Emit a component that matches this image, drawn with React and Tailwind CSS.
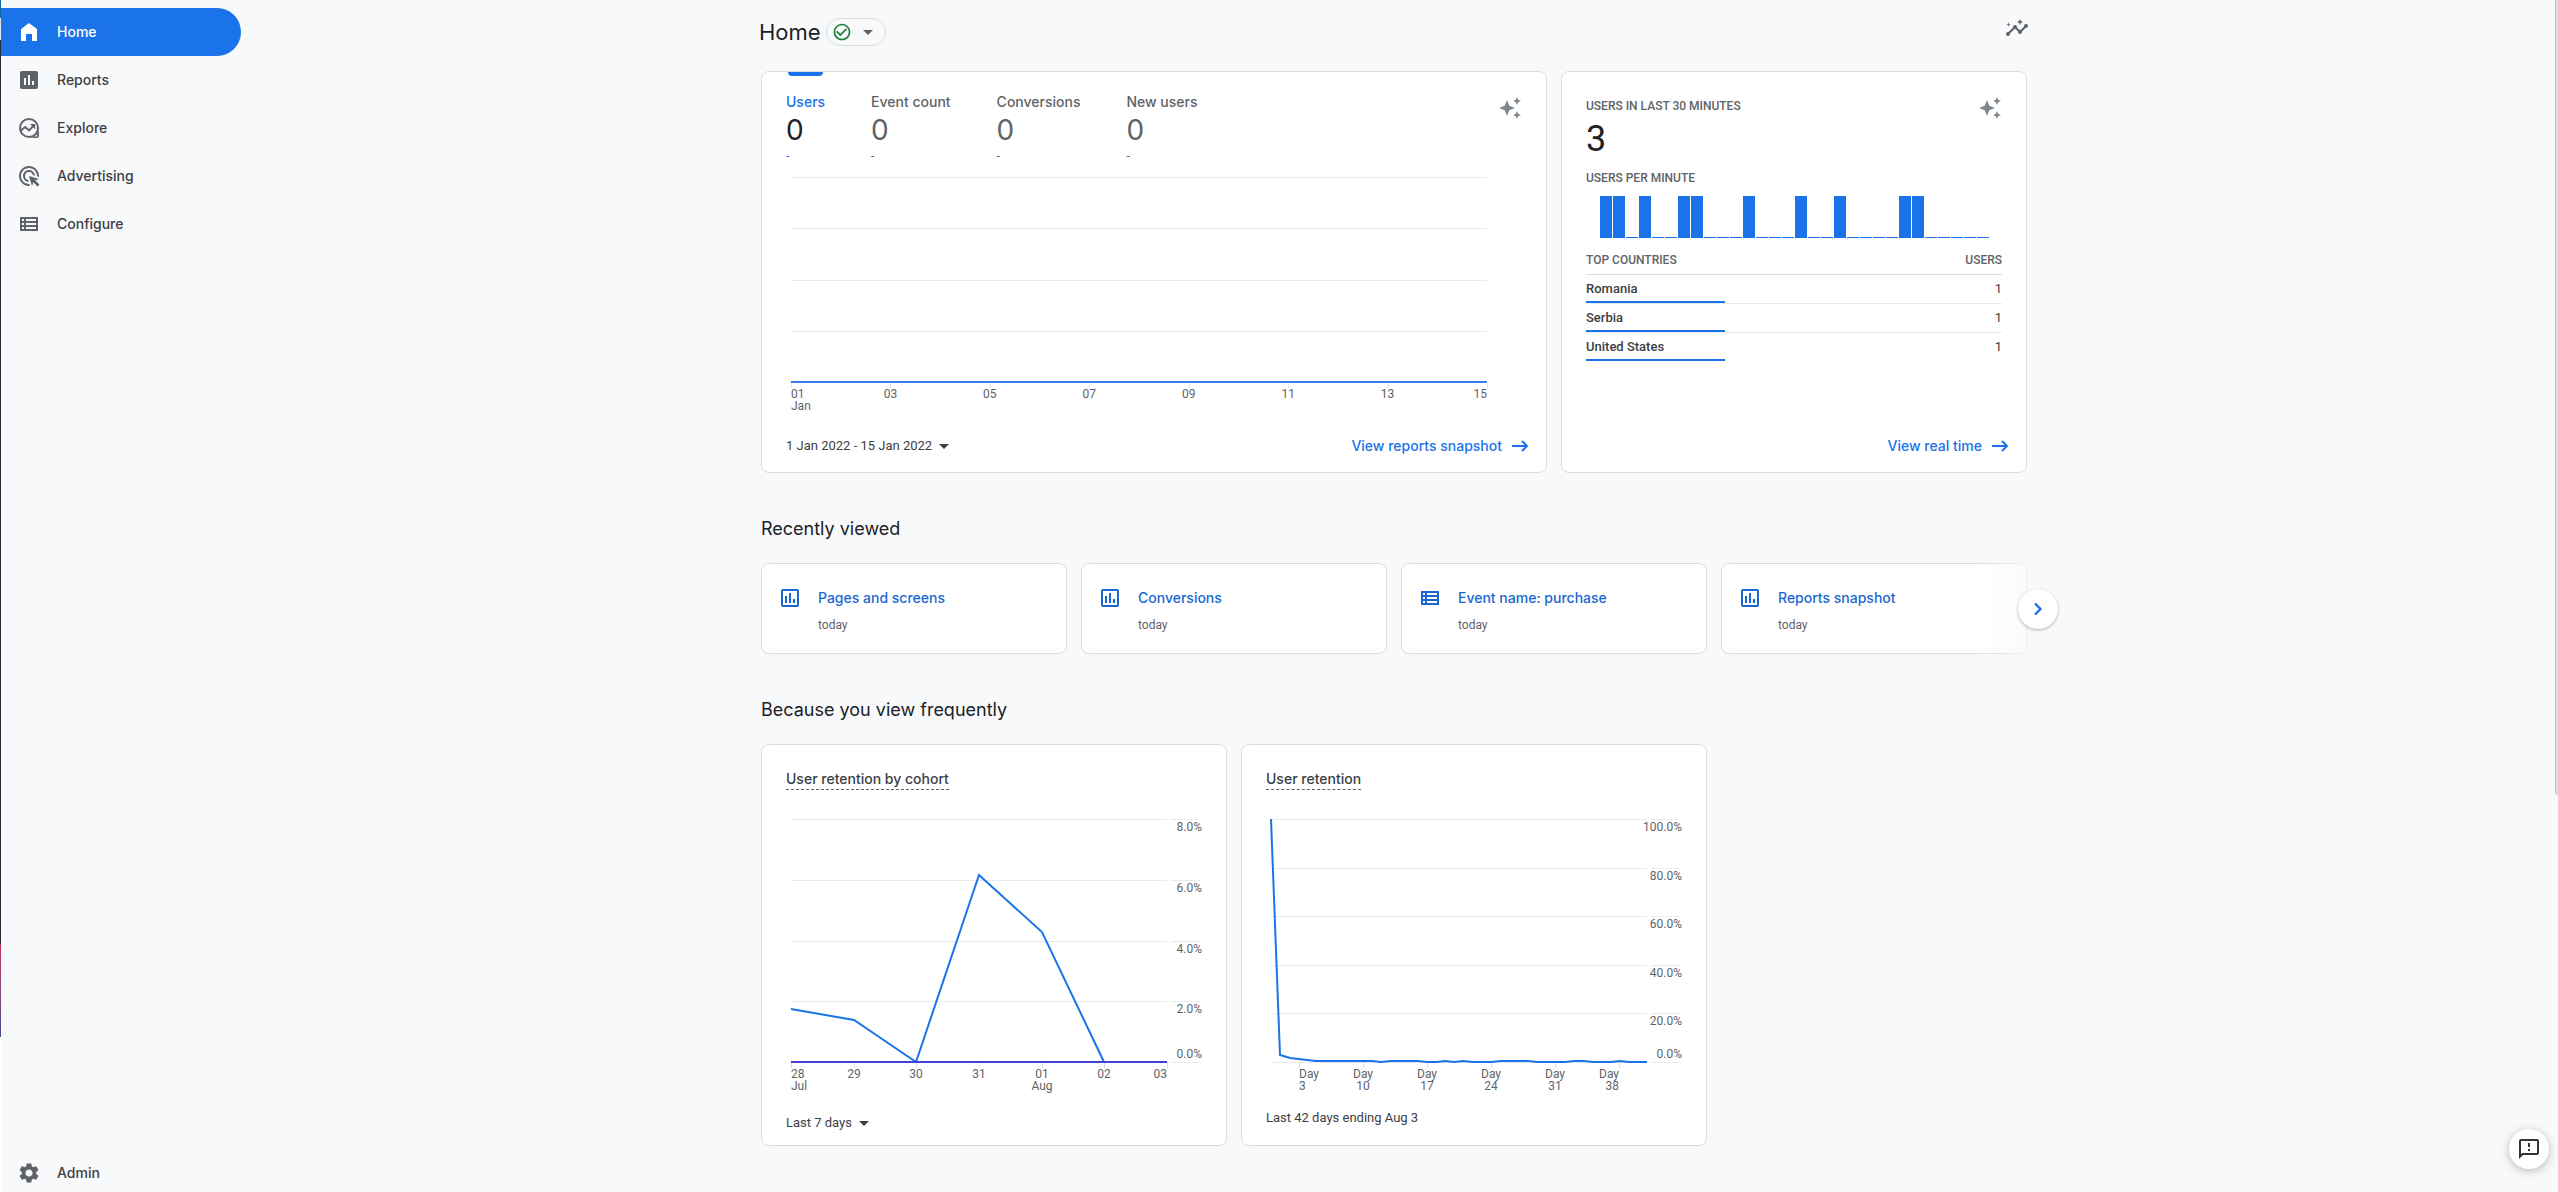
import {
    MdAdsClick,
    MdArrowDropDown,
    MdAssessment,
    MdCheckCircleOutline,
    MdInsights,
    MdOutlineAssessment,
    MdOutlineFeedback,
    MdOutlineViewList,
    MdSettings,
} from "react-icons/md";

function HomeIcon({ className }) {
    return (
        <svg viewBox="0 0 24 24" className={className} fill="currentColor" aria-hidden="true">
            <path d="M4 21V9l8-6 8 6v12h-5v-7H9v7z" />
        </svg>
    );
}

function ExploreIcon({ className }) {
    return (
        <svg viewBox="0 0 24 24" className={className} fill="none" stroke="currentColor" strokeWidth="2" aria-hidden="true">
            <circle cx="12" cy="12" r="9" />
            <path d="M22 12v8.200a1.800 1.800 0 0 1-1.800 1.800H12c5.500 0 10-4.500 10-10z" fill="currentColor" stroke="none" />
            <circle cx="19.400" cy="19.800" r="0.900" fill="#f8f9fb" stroke="none" />
            <path d="M3.500 14.800l4.700-3.800 3.800 3.400 4.600-4.600" />
            <path d="M13 8h5.200v5.200z" fill="currentColor" stroke="none" />
        </svg>
    );
}

function SparkleIcon({ className }) {
    return (
        <svg viewBox="0 0 24 24" className={className} fill="currentColor" aria-hidden="true">
            <path d="M9 4l2.300 5.700L17 12l-5.700 2.300L9 20l-2.300-5.700L1 12l5.700-2.300z" />
            <path d="M19 1l1.200 2.800L23 5l-2.800 1.200L19 9l-1.200-2.800L15 5l2.800-1.200z" />
            <path d="M19 15l1.200 2.800L23 19l-2.800 1.200L19 23l-1.200-2.800L15 19l2.800-1.200z" />
        </svg>
    );
}

function ArrowIcon({ className }) {
    return (
        <svg viewBox="0 0 20 20" className={className} fill="none" stroke="currentColor" strokeWidth="2" aria-hidden="true">
            <path d="M2 10h15M12 5l5 5-5 5" />
        </svg>
    );
}

function ChevronIcon({ className }) {
    return (
        <svg viewBox="0 0 24 24" className={className} fill="none" stroke="currentColor" strokeWidth="2.400" aria-hidden="true">
            <path d="M9 6.500l5.500 5.500L9 17.500" />
        </svg>
    );
}

const navItems = [
    { label: "Home", icon: HomeIcon, active: true },
    { label: "Reports", icon: MdAssessment },
    { label: "Explore", icon: ExploreIcon },
    { label: "Advertising", icon: MdAdsClick },
    { label: "Configure", icon: MdOutlineViewList },
];

const metrics = [
    { label: "Users", active: true },
    { label: "Event count" },
    { label: "Conversions" },
    { label: "New users" },
];

const minutes = [1, 1, 0, 1, 0, 0, 1, 1, 0, 0, 0, 1, 0, 0, 0, 1, 0, 0, 1, 0, 0, 0, 0, 1, 1, 0, 0, 0, 0, 0];

const countries = [
    { name: "Romania", users: 1 },
    { name: "Serbia", users: 1 },
    { name: "United States", users: 1 },
];

const recent = [
    { title: "Pages and screens", icon: MdOutlineAssessment },
    { title: "Conversions", icon: MdOutlineAssessment },
    { title: "Event name: purchase", icon: MdOutlineViewList },
    { title: "Reports snapshot", icon: MdOutlineAssessment },
];

function Sidebar() {
    return (
        <nav className="sticky top-0 flex h-screen w-[240px] shrink-0 flex-col justify-between pt-2">
            <div>
                {navItems.map(({ label, icon: Icon, active }) => (
                    <a
                        key={label}
                        href="#"
                        className={
                            active
                                ? "flex h-12 items-center gap-4 rounded-r-full bg-[#1a73e8] pl-4 text-sm font-medium text-white"
                                : "flex h-12 items-center gap-4 rounded-r-full pl-4 text-sm font-medium text-[#3c4043]"
                        }
                    >
                        <Icon className={active ? "size-6 text-white" : "size-6 text-[#5f6368]"} />
                        {label}
                    </a>
                ))}
            </div>
            <a href="#" className="flex h-[38px] items-center gap-4 pl-4 text-sm font-medium text-[#3c4043]">
                <MdSettings className="size-6 text-[#5f6368]" />
                Admin
            </a>
        </nav>
    );
}

// Sliver of the desktop that shows left of the window
function DesktopEdge() {
    return (
        <div className="sticky top-0 flex h-screen w-px shrink-0 flex-col">
            <div className="h-[18px] bg-[#1668a5]" />
            <div className="h-[22px] bg-[#e6e7ea]" />
            <div className="h-[904px] bg-[#2b2c33]" />
            <div className="h-[93px] bg-linear-to-b from-[#c22a60] to-[#454a90]" />
            <div className="flex-1 bg-white" />
        </div>
    );
}

function Card({ className, children }) {
    return <section className={`relative rounded-lg border border-[#dadce0] bg-white ${className}`}>{children}</section>;
}

function CardLink({ children }) {
    return (
        <a href="#" className="flex items-center gap-2 text-sm font-medium text-[#1a73e8]">
            {children}
            <ArrowIcon className="size-5" />
        </a>
    );
}

function XLabel({ x, lines, anchor = "middle", y }) {
    return (
        <text x={x} y={y} textAnchor={anchor} fontSize="12" fill="#5f6368" className="font-['Roboto',sans-serif]">
            {lines.map((line, i) => (
                <tspan key={line} x={x} dy={i * 12}>{line}</tspan>
            ))}
        </text>
    );
}

function UsersChart() {
    const labels = ["01", "03", "05", "07", "09", "11", "13", "15"];
    const step = 696 / 7;
    return (
        <svg viewBox="0 0 696 236" className="block w-full overflow-visible" role="img" aria-label="Users by day">
            {[0, 51, 103, 154].map((y) => (
                <rect key={y} x="0" y={y} width="696" height="1" fill="#e8eaed" />
            ))}
            {labels.map((label, i) => (
                <rect key={label} x={Math.round(i * step)} y="206" width="1" height="5" fill="#e0e2e5" />
            ))}
            <rect x="0" y="204" width="696" height="2" fill="#3b7de9" />
            {labels.map((label, i) => (
                <XLabel
                    key={label}
                    x={i * step}
                    y="221"
                    lines={i === 0 ? [label, "Jan"] : [label]}
                    anchor={i === 0 ? "start" : i === 7 ? "end" : "middle"}
                />
            ))}
        </svg>
    );
}

// Small line chart with a percentage scale on its right
function RetentionChart({ label, grid, points, ticks, baseline }) {
    return (
        <svg viewBox="0 0 411 272" className="block w-full overflow-visible" role="img" aria-label={label}>
            {grid.map(({ y, text, above }) => (
                <g key={text}>
                    <rect x="0" y={y} width="376" height="1" fill="#e8eaed" />
                    <rect x="380" y={y} width="30" height="1" fill="#e8eaed" />
                    <text x="411" y={above ? y - 4 : y + 12} textAnchor="end" fontSize="12" fill="#5f6368" className="font-['Roboto',sans-serif]">
                        {text}
                    </text>
                </g>
            ))}
            {ticks.map((tick) => (
                <g key={tick.x}>
                    <rect x={Math.round(tick.x)} y="243" width="1" height="6" fill="#dadce0" />
                    <XLabel x={tick.x} y="259" lines={tick.lines} anchor={tick.anchor} />
                </g>
            ))}
            <polyline points={points} fill="none" stroke="#1a73e8" strokeWidth="2" />
            {baseline && <rect x="0" y="242" width="376" height="2" fill="#4540d0" />}
        </svg>
    );
}

function OverviewCard() {
    return (
        <Card className="col-span-10 flex h-[402px] flex-col">
            <SparkleIcon className="absolute top-6 right-6 size-6 text-[#80868b]" />
            <div className="flex gap-[46px] px-6">
                {metrics.map(({ label, active }) => (
                    <button
                        key={label}
                        type="button"
                        className={active ? "relative pt-5 text-left text-[#1a73e8]" : "relative pt-5 text-left text-[#5f6368]"}
                    >
                        {active && <span className="absolute inset-x-[2px] top-0 h-1 rounded-b-[4px] bg-[#1a73e8]" />}
                        <span className="block text-sm font-medium">{label}</span>
                        <span className={active ? "block text-[28px] leading-9 text-[#202124]" : "block text-[28px] leading-9"}>0</span>
                        <span className="block font-['Roboto',sans-serif] text-xs">-</span>
                    </button>
                ))}
            </div>
            <div className="mt-[13px] mr-[59px] ml-[29px]">
                <UsersChart />
            </div>
            <div className="mt-auto mb-[14px] flex items-center justify-between pr-4 pl-6">
                <button type="button" className="flex items-center font-['Roboto',sans-serif] text-[13px] text-[#3c4043]">
                    1 Jan 2022 - 15 Jan 2022
                    <MdArrowDropDown className="size-6" />
                </button>
                <CardLink>View reports snapshot</CardLink>
            </div>
        </Card>
    );
}

function RealtimeCard() {
    return (
        <Card className="col-span-6 flex h-[402px] flex-col px-6 font-['Roboto',sans-serif]">
            <SparkleIcon className="absolute top-6 right-6 size-6 text-[#80868b]" />
            <h2 className="mt-[26px] text-xs font-medium text-[#5f6368]">USERS IN LAST 30 MINUTES</h2>
            <p className="mt-[5px] text-4xl text-[#202124]">3</p>
            <h3 className="mt-[11px] text-xs font-medium text-[#5f6368]">USERS PER MINUTE</h3>
            <div className="mt-[10px] mr-[13px] ml-[14px] flex h-[42px] items-end gap-px">
                {minutes.map((n, i) => (
                    <div key={i} className={n ? "h-full flex-1 bg-[#1a73e8]" : "h-px flex-1 bg-[#1a73e8]"} />
                ))}
            </div>
            <table className="mt-2 w-full text-[13px]">
                <thead>
                    <tr className="h-7 border-b border-[#dadce0] text-xs text-[#5f6368]">
                        <th className="text-left font-medium">TOP COUNTRIES</th>
                        <th className="text-right font-medium">USERS</th>
                    </tr>
                </thead>
                <tbody>
                    {countries.map(({ name, users }) => (
                        <tr key={name} className="h-[29px] border-b border-[#e8eaed] text-[#3c4043] last:border-b-0">
                            <td className="relative w-2/3 p-0 font-medium">
                                {name}
                                <span className="absolute bottom-0 left-0 h-[2px] w-1/2 bg-[#1a73e8]" />
                            </td>
                            <td className="p-0 text-right">{users}</td>
                        </tr>
                    ))}
                </tbody>
            </table>
            <div className="mt-auto -mr-2 mb-[14px] flex h-6 items-center justify-end font-['Inter',sans-serif]">
                <CardLink>View real time</CardLink>
            </div>
        </Card>
    );
}

function RetentionCard({ title, chart, children }) {
    return (
        <Card className="col-span-6 flex h-[402px] flex-col">
            <h3 className="mt-6 ml-6 self-start border-b border-dashed border-[#5f6368] text-sm font-medium text-[#3c4043]">{title}</h3>
            <div className="mt-[29px] mr-6 ml-[29px]">{chart}</div>
            {children}
        </Card>
    );
}

const cohortGrid = [
    { y: 0, text: "8.0%" },
    { y: 61, text: "6.0%" },
    { y: 122, text: "4.0%" },
    { y: 182, text: "2.0%" },
    { y: 243, text: "0.0%", above: true },
];

const cohortTicks = [
    { x: 0, lines: ["28", "Jul"], anchor: "start" },
    { x: 63, lines: ["29"] },
    { x: 125, lines: ["30"] },
    { x: 188, lines: ["31"] },
    { x: 251, lines: ["01", "Aug"] },
    { x: 313, lines: ["02"] },
    { x: 376, lines: ["03"], anchor: "end" },
];

const retentionGrid = [
    { y: 0, text: "100.0%" },
    { y: 49, text: "80.0%" },
    { y: 97, text: "60.0%" },
    { y: 146, text: "40.0%" },
    { y: 194, text: "20.0%" },
    { y: 243, text: "0.0%", above: true },
];

const retentionTicks = [
    { x: 28, lines: ["Day", "3"], anchor: "start" },
    { x: 92, lines: ["Day", "10"] },
    { x: 156, lines: ["Day", "17"] },
    { x: 220, lines: ["Day", "24"] },
    { x: 284, lines: ["Day", "31"] },
    { x: 348, lines: ["Day", "38"], anchor: "end" },
];

export default function App() {
    return (
        <div className="flex min-h-screen bg-[#f8f9fb] font-['Inter',sans-serif] text-[#202124]">
            <DesktopEdge />
            <Sidebar />
            <main className="min-w-0 flex-1 pr-[11px] pb-11">
                <div className="mx-auto max-w-[1274px]">
                    <header className="flex h-[71px] items-start justify-between px-[2px] pt-4">
                        <div className="flex items-center gap-[5px]">
                            <h1 className="text-[22px] leading-8">Home</h1>
                            <button
                                type="button"
                                aria-label="Data quality"
                                className="flex h-7 items-center gap-1 rounded-full border border-[#dadce0] px-[5px]"
                            >
                                <MdCheckCircleOutline className="size-5 text-[#188038]" />
                                <MdArrowDropDown className="size-6 text-[#5f6368]" />
                            </button>
                        </div>
                        <button type="button" aria-label="Insights">
                            <MdInsights className="size-6 text-[#5f6368]" />
                        </button>
                    </header>
                    <div className="px-1">
                        <div className="grid grid-cols-16 gap-[14px]">
                            <OverviewCard />
                            <RealtimeCard />
                        </div>

                        <h2 className="mt-11 text-lg leading-6 text-[#202124]">Recently viewed</h2>
                        <div className="relative mt-[22px]">
                            <div className="grid grid-cols-4 gap-[14px]">
                                {recent.map(({ title, icon: Icon }) => (
                                    <Card key={title} className="flex h-[91px] gap-4 pt-[22px] pl-4">
                                        <Icon className="size-6 text-[#1967d2]" />
                                        <div>
                                            <a href="#" className="block text-sm leading-6 font-medium text-[#1967d2]">{title}</a>
                                            <p className="mt-[3px] font-['Roboto',sans-serif] text-xs leading-6 text-[#5f6368]">today</p>
                                        </div>
                                    </Card>
                                ))}
                            </div>
                            <div className="absolute inset-y-0 right-0 w-12 bg-linear-to-r from-transparent to-[#f8f9fb]/70" />
                            <button
                                type="button"
                                aria-label="Next"
                                className="absolute top-[26px] -right-[31px] flex size-10 items-center justify-center rounded-full bg-white text-[#1a73e8] shadow-[0_1px_3px_rgba(60,64,67,0.4)]"
                            >
                                <ChevronIcon className="size-6" />
                            </button>
                        </div>

                        <h2 className="mt-11 text-lg leading-6 text-[#202124]">Because you view frequently</h2>
                        <div className="mt-[22px] grid grid-cols-16 gap-[14px]">
                            <RetentionCard
                                title="User retention by cohort"
                                chart={
                                    <RetentionChart
                                        label="User retention by cohort"
                                        grid={cohortGrid}
                                        ticks={cohortTicks}
                                        points="0,190 63,201 125,243 188,56 251,113 313,243"
                                        baseline
                                    />
                                }
                            >
                                <button
                                    type="button"
                                    className="mt-auto mb-[10px] ml-6 flex items-center self-start font-['Roboto',sans-serif] text-[13px] text-[#3c4043]"
                                >
                                    Last 7 days
                                    <MdArrowDropDown className="size-6" />
                                </button>
                            </RetentionCard>
                            <RetentionCard
                                title="User retention"
                                chart={
                                    <RetentionChart
                                        label="User retention"
                                        grid={retentionGrid}
                                        ticks={retentionTicks}
                                        points="0,0 9,236 19,239 45,242 101,242 110,243 120,242 147,242 156,243 166,243 174,242 183,243 192,242 202,243 220,243 230,242 257,242 266,243 294,243 303,242 313,242 322,243 340,243 349,242 358,243 376,243"
                                    />
                                }
                            >
                                <p className="mt-auto mb-[18px] ml-6 font-['Roboto',sans-serif] text-[13px] text-[#3c4043]">
                                    Last 42 days ending Aug 3
                                </p>
                            </RetentionCard>
                        </div>
                    </div>
                </div>
            </main>

            <button
                type="button"
                aria-label="Send feedback"
                className="fixed right-[9px] bottom-[23px] flex size-10 items-center justify-center rounded-full bg-white text-[#33343d] shadow-[0_2px_8px_rgba(60,64,67,0.35)]"
            >
                <MdOutlineFeedback className="size-6" />
            </button>
            <div className="fixed top-0 right-0 h-2/3 w-[3px] rounded-bl border-l border-[#c1c2c5] bg-[#dadce0]" />
        </div>
    );
}
